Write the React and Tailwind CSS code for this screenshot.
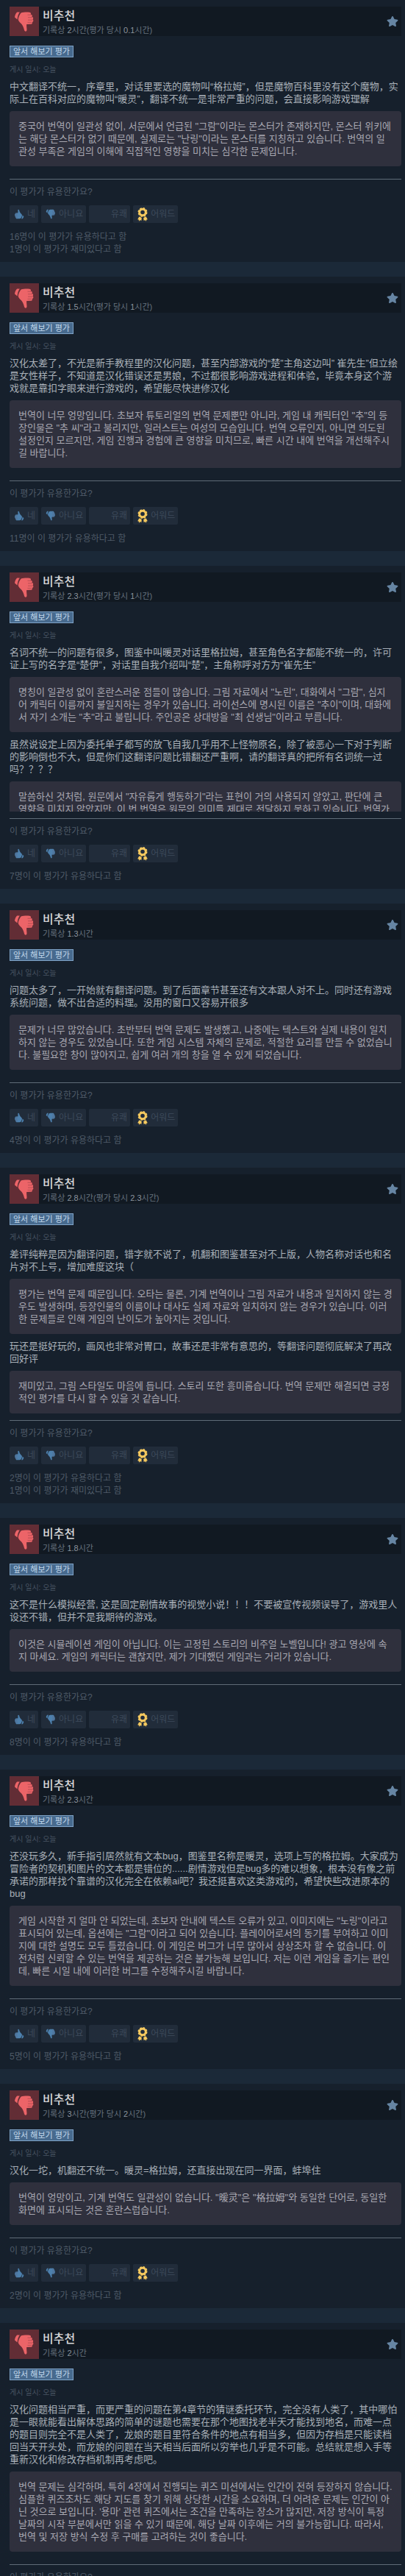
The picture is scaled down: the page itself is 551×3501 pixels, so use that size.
import React from "react";
import { FaStar } from "react-icons/fa";

const reviews = [
  {
    hours: "2",
    hoursAtReview: "0.1",
    content: [
      {
        original:
          "中文翻译不统一，序章里，对话里要选的魔物叫“格拉姆”，但是魔物百科里没有这个魔物，实际上在百科对应的魔物叫“暖灵”，翻译不统一是非常严重的问题，会直接影响游戏理解",
        translated:
          '중국어 번역이 일관성 없이, 서문에서 언급된 "그람"이라는 몬스터가 존재하지만, 몬스터 위키에는 해당 몬스터가 없기 때문에, 실제로는 "난링"이라는 몬스터를 지칭하고 있습니다. 번역의 일관성 부족은 게임의 이해에 직접적인 영향을 미치는 심각한 문제입니다.',
      },
    ],
    helpful: 16,
    funny: 1,
  },
  {
    hours: "1.5",
    hoursAtReview: "1",
    content: [
      {
        original:
          "汉化太差了，不光是新手教程里的汉化问题，甚至内部游戏的“楚”主角这边叫” 崔先生”但立绘是女性样子，不知道是汉化错误还是男娘，不过都很影响游戏进程和体验，毕竟本身这个游戏就是靠扣字眼来进行游戏的，希望能尽快进修汉化",
        translated:
          '번역이 너무 엉망입니다. 초보자 튜토리얼의 번역 문제뿐만 아니라, 게임 내 캐릭터인 "추"의 등장인물은 "추 씨"라고 불리지만, 일러스트는 여성의 모습입니다. 번역 오류인지, 아니면 의도된 설정인지 모르지만, 게임 진행과 경험에 큰 영향을 미치므로, 빠른 시간 내에 번역을 개선해주시길 바랍니다.',
      },
    ],
    helpful: 11,
  },
  {
    hours: "2.3",
    hoursAtReview: "1",
    content: [
      {
        original:
          "名词不统一的问题有很多，图鉴中叫暖灵对话里格拉姆，甚至角色名字都能不统一的，许可证上写的名字是“楚伊”，对话里自我介绍叫“楚”，主角称呼对方为“崔先生”",
        translated:
          '명칭이 일관성 없이 혼란스러운 점들이 많습니다. 그림 자료에서 "노린", 대화에서 "그람", 심지어 캐릭터 이름까지 불일치하는 경우가 있습니다. 라이선스에 명시된 이름은 "추이"이며, 대화에서 자기 소개는 "추"라고 불립니다. 주인공은 상대방을 "최 선생님"이라고 부릅니다.',
      },
      {
        original:
          "虽然说设定上因为委托单子都写的放飞自我几乎用不上怪物原名，除了被恶心一下对于判断的影响倒也不大，但是你们这翻译问题比错翻还严重啊，请的翻译真的把所有名词统一过吗？？？？",
        translated:
          '말씀하신 것처럼, 원문에서 "자유롭게 행동하기"라는 표현이 거의 사용되지 않았고, 판단에 큰 영향을 미치지 않았지만, 이 번 번역은 원문의 의미를 제대로 전달하지 못하고 있습니다. 번역가',
      },
    ],
    helpful: 7,
  },
  {
    hours: "1.3",
    content: [
      {
        original:
          "问题太多了，一开始就有翻译问题。到了后面章节甚至还有文本跟人对不上。同时还有游戏系统问题，做不出合适的料理。没用的窗口又容易开很多",
        translated:
          "문제가 너무 많았습니다. 초반부터 번역 문제도 발생했고, 나중에는 텍스트와 실제 내용이 일치하지 않는 경우도 있었습니다. 또한 게임 시스템 자체의 문제로, 적절한 요리를 만들 수 없었습니다. 불필요한 창이 많아지고, 쉽게 여러 개의 창을 열 수 있게 되었습니다.",
      },
    ],
    helpful: 4,
  },
  {
    hours: "2.8",
    hoursAtReview: "2.3",
    content: [
      {
        original:
          "差评纯粹是因为翻译问题，错字就不说了，机翻和图鉴甚至对不上版，人物名称对话也和名片对不上号，增加难度这块（",
        translated:
          "평가는 번역 문제 때문입니다. 오타는 물론, 기계 번역이나 그림 자료가 내용과 일치하지 않는 경우도 발생하며, 등장인물의 이름이나 대사도 실제 자료와 일치하지 않는 경우가 있습니다. 이러한 문제들로 인해 게임의 난이도가 높아지는 것입니다.",
      },
      {
        original:
          "玩还是挺好玩的，画风也非常对胃口，故事还是非常有意思的，等翻译问题彻底解决了再改回好评",
        translated:
          "재미있고, 그림 스타일도 마음에 듭니다. 스토리 또한 흥미롭습니다. 번역 문제만 해결되면 긍정적인 평가를 다시 할 수 있을 것 같습니다.",
      },
    ],
    helpful: 2,
    funny: 1,
  },
  {
    hours: "1.8",
    content: [
      {
        original:
          "这不是什么模拟经营, 这是固定剧情故事的视觉小说！！！不要被宣传视频误导了，游戏里人设还不错，但并不是我期待的游戏。",
        translated:
          "이것은 시뮬레이션 게임이 아닙니다. 이는 고정된 스토리의 비주얼 노벨입니다! 광고 영상에 속지 마세요. 게임의 캐릭터는 괜찮지만, 제가 기대했던 게임과는 거리가 있습니다.",
      },
    ],
    helpful: 8,
  },
  {
    hours: "2.3",
    content: [
      {
        original:
          "还没玩多久，新手指引居然就有文本bug，图鉴里名称是暖灵，选项上写的格拉姆。大家成为冒险者的契机和图片的文本都是错位的......剧情游戏但是bug多的难以想象，根本没有像之前承诺的那样找个靠谱的汉化完全在依赖ai吧？我还挺喜欢这类游戏的，希望快些改进原本的bug",
        translated:
          '게임 시작한 지 얼마 안 되었는데, 초보자 안내에 텍스트 오류가 있고, 이미지에는 "노링"이라고 표시되어 있는데, 옵션에는 "그람"이라고 되어 있습니다. 플레이어로서의 동기를 부여하고 이미지에 대한 설명도 모두 틀렸습니다. 이 게임은 버그가 너무 많아서 상상조차 할 수 없습니다. 이전처럼 신뢰할 수 있는 번역을 제공하는 것은 불가능해 보입니다. 저는 이런 게임을 즐기는 편인데, 빠른 시일 내에 이러한 버그를 수정해주시길 바랍니다.',
      },
    ],
    helpful: 5,
  },
  {
    hours: "3",
    hoursAtReview: "2",
    content: [
      {
        original: "汉化一坨，机翻还不统一。暖灵=格拉姆，还直接出现在同一界面，蚌埠住",
        translated:
          '번역이 엉망이고, 기계 번역도 일관성이 없습니다. "暖灵"은 "格拉姆"와 동일한 단어로, 동일한 화면에 표시되는 것은 혼란스럽습니다.',
      },
    ],
    helpful: 2,
  },
  {
    hours: "2",
    content: [
      {
        original:
          "汉化问题相当严重，而更严重的问题在第4章节的猜谜委托环节，完全没有人类了，其中哪怕是一眼就能看出解体思路的简单的谜题也需要在那个地图找老半天才能找到地名，而难一点的题目则完全不是人类了，龙娘的题目里符合条件的地点有相当多，但因为存档是只能读档回当天开头处，而龙娘的问题在当天相当后面所以穷举也几乎是不可能。总结就是想入手等重新汉化和修改存档机制再考虑吧。",
        translated:
          "번역 문제는 심각하며, 특히 4장에서 진행되는 퀴즈 미션에서는 인간이 전혀 등장하지 않습니다. 심플한 퀴즈조차도 해당 지도를 찾기 위해 상당한 시간을 소요하며, 더 어려운 문제는 인간이 아닌 것으로 보입니다. '용마' 관련 퀴즈에서는 조건을 만족하는 장소가 많지만, 저장 방식이 특정 날짜의 시작 부분에서만 읽을 수 있기 때문에, 해당 날짜 이후에는 거의 불가능합니다. 따라서, 번역 및 저장 방식 수정 후 구매를 고려하는 것이 좋습니다.",
      },
    ],
  },
];

const ThumbDown = ({ className }) => (
  <svg viewBox="6 6 28 29" fill="currentColor" className={className} aria-hidden="true">
    <path d="M10.2 7.6h3.6c-2 3-2.900 5.800-3.200 9.800L7 14.400c.3-2.600 1.200-4.800 3.200-6.800z" />
    <path d="M15.600 8.600C18 7.600 23 7.400 27 7.700c1.800.1 2.500 1.600 1.800 2.700 2 .3 2.600 2.200 1.500 3.400 2 .4 2.400 2.600 1.200 3.600 1.400.8 1.100 3.200-.7 3.500.6 1.700-.4 2.900-2 2.900l-5.600.1c-.3 2.900.4 5.400.3 7.900-.1 2.300-2.700 2.500-3.400.5-.8-3-1.500-5.800-3.500-8.300-2-2.300-3.800-3.300-4.800-6 .2-3.600 1.500-6.600 3.800-9.400z" />
    <path
      d="M24.500 11.200h5M25 14.700h6M25 18.200h6.200M24.500 21.400h5.500"
      fill="none"
      stroke="#6a2f38"
      strokeOpacity="0.55"
      strokeWidth="0.7"
    />
  </svg>
);

const AwardIcon = () => (
  <svg viewBox="0 0 14 19" className="w-[14px] h-[19px] shrink-0" fill="#f5c95f" aria-hidden="true">
    <path d="M.2 16.300 2.400 12.200l3.400 1.700-.5 4-1.600-1-1.500 1.800-.5-2.200z" />
    <path d="M13.800 16.300 11.600 12.200l-3.400 1.700.5 4 1.600-1 1.500 1.800.5-2.200z" />
    <circle cx="7" cy="6.500" r="4.300" fill="none" stroke="#f5c95f" strokeWidth="3" />
    <circle
      cx="7"
      cy="6.500"
      r="5.800"
      fill="none"
      stroke="#f5c95f"
      strokeWidth="1.400"
      strokeDasharray="2.600 1.950"
    />
  </svg>
);

const VoteButton = ({ icon, label, className = "" }) => (
  <button
    type="button"
    className={`h-6 flex items-center gap-1 pl-[6px] pr-1 rounded-xs bg-[#212c3a] text-xs text-[#3d4a5a] cursor-pointer ${className}`}
  >
    {icon}
    {label}
  </button>
);

const ReviewCard = ({ review }) => {
  const { hours, hoursAtReview, content, helpful, funny } = review;

  return (
    <article className="bg-[#16202c] pt-[9px] pb-2 pl-[13px] pr-[5px]">
      <header className="h-10 flex items-center bg-[#111922]">
        <div className="w-10 h-10 shrink-0 flex items-center justify-center bg-[#622d35]">
          <ThumbDown className="w-7 h-[29px] text-[#ec6468]" />
        </div>
        <div className="flex-1 pl-[5px] pt-[3px]">
          <h2 className="text-base leading-[22px] font-medium text-[#d6d7d8]">비추천</h2>
          <p className="text-[11px] leading-[17px] text-[#66727e]">
            기록상 <span className="text-[#8b949d]">{hours}</span>시간
            {hoursAtReview && (
              <>
                (평가 당시 <span className="text-[#8b949d]">{hoursAtReview}</span>시간)
              </>
            )}
          </p>
        </div>
        <FaStar className="w-4 h-4 mr-1 text-[#6685a3]" />
      </header>

      <div className="mt-[13px] flex">
        <span className="h-4 px-1 border border-[#7fa3c7] bg-[#476a8e] text-[11px] leading-[14px] text-[#c3d9ec]">
          앞서 해보기 평가
        </span>
      </div>
      <p className="mt-2 mb-[6px] text-[10px] leading-[17px] text-[#475361]">게시 일시: 오늘</p>

      <div className="max-h-[225px] overflow-hidden flex flex-col gap-2 pb-2 text-[13px] leading-[17px]">
        {content.map((part, i) => (
          <React.Fragment key={i}>
            <p lang="zh-CN" className="shrink-0 pr-[3px] text-[#a9b0b8]">
              {part.original}
            </p>
            <p className="shrink-0 p-3 rounded bg-[#2f303d] text-[#a9a8b2]">{part.translated}</p>
          </React.Fragment>
        ))}
      </div>

      <hr className="mt-[9px] border-[#5f6b77]" />
      <p className="my-[9px] text-xs leading-[17px] text-[#4f5b68]">이 평가가 유용한가요?</p>
      <div className="flex gap-1">
        <VoteButton
          icon={<ThumbDown className="w-[14px] h-[14px] rotate-180 text-[#4d80ad]" />}
          label="네"
        />
        <VoteButton
          icon={<ThumbDown className="w-[14px] h-[14px] text-[#4d80ad]" />}
          label="아니요"
        />
        <VoteButton label="유쾌" className="w-14 justify-end" />
        <VoteButton icon={<AwardIcon />} label="어워드" />
      </div>
      <div className="mt-[11px] text-xs leading-[17px] text-[#4f5b68]">
        {helpful && <p>{helpful}명이 이 평가가 유용하다고 함</p>}
        {funny && <p>{funny}명이 이 평가가 재미있다고 함</p>}
      </div>
    </article>
  );
};

export default function App() {
  return (
    <main
      lang="ko"
      className="h-screen overflow-hidden flex flex-col gap-5 bg-[#1b2938] font-['Liberation_Sans','Noto_Sans_CJK_KR',sans-serif] [&_[lang=zh-CN]]:font-['Liberation_Sans','Noto_Sans_CJK_SC',sans-serif] [&>article]:shrink-0"
    >
      {reviews.map((review, i) => (
        <ReviewCard key={i} review={review} />
      ))}
    </main>
  );
}
